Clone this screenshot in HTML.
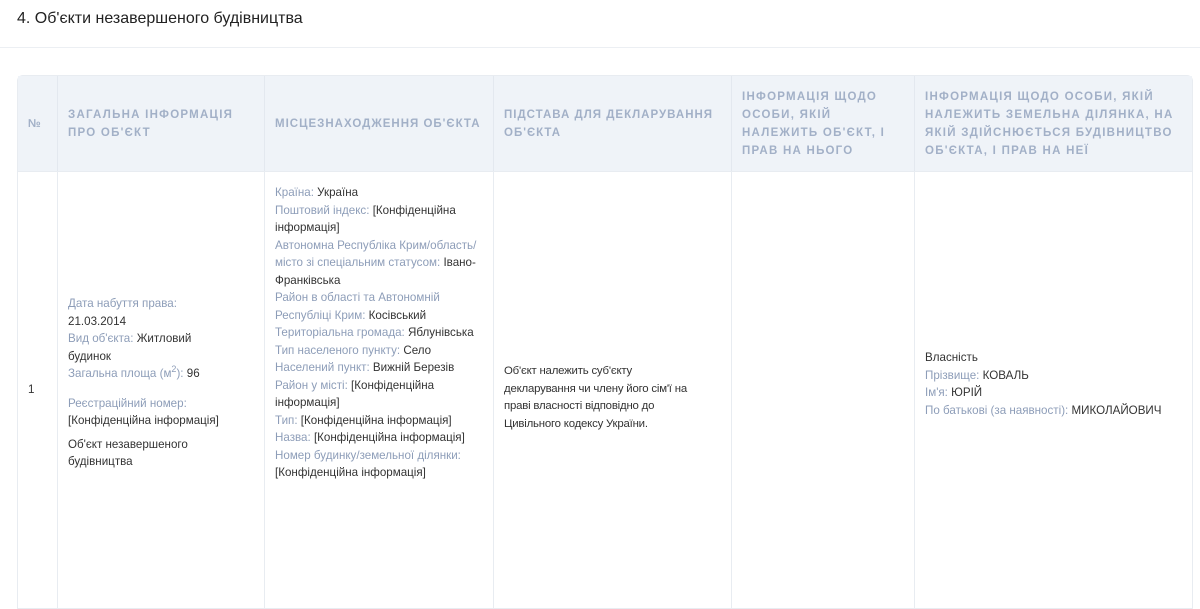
<!DOCTYPE html>
<html><head><meta charset="utf-8"><style>
body{margin:0;width:1200px;height:462px;overflow:hidden;background:#fff;font-family:"Liberation Sans",sans-serif;color:#333}
h2{margin:0;position:absolute;left:17px;top:10px;font-size:16px;font-weight:normal;color:#222}
.sep{position:absolute;left:0;top:47px;width:1200px;height:1px;background:#eceff3}
table{position:absolute;left:17px;top:75px;border-collapse:separate;border-spacing:0;width:1176px;table-layout:fixed;border:1px solid #e8ecf1;border-radius:6px 6px 0 0}
th{background:#eff3f8;color:#a2b0c7;font-size:11.5px;font-weight:bold;letter-spacing:1.25px;text-align:left;line-height:18px;height:95px;padding:0 0 0 10px;vertical-align:middle;border-left:1px solid #e3e8ef;text-transform:uppercase;white-space:nowrap;overflow:hidden}
th:first-child,td:first-child{border-left:none}
td{font-size:11.6px;line-height:17.5px;padding:0 24px 0 10px;vertical-align:middle;border-left:1px solid #e8ecf1;border-top:1px solid #e8ecf1;height:420px}
.l{color:#8d9db8}
td.top{vertical-align:top;padding-top:12px;padding-right:14px}
.g1{margin-top:12px}.g2{margin-top:6px}
.c{font-size:11.4px;line-height:17.5px;letter-spacing:-0.2px;padding-right:20px;padding-top:16px}
</style></head><body>
<h2>4. Об'єкти незавершеного будівництва</h2>
<div class="sep"></div>
<table>
<colgroup><col style="width:39px"><col style="width:207px"><col style="width:229px"><col style="width:238px"><col style="width:183px"><col></colgroup>
<tr><th style="letter-spacing:0">№</th><th>Загальна інформація<br>про об'єкт</th><th style="letter-spacing:1px">Місцезнаходження об'єкта</th><th style="letter-spacing:1px">Підстава для декларування<br>об'єкта</th><th>Інформація щодо<br>особи, якій<br>належить об'єкт, і<br>прав на нього</th><th>Інформація щодо особи, якій<br>належить земельна ділянка, на<br>якій здійснюється будівництво<br>об'єкта, і прав на неї</th></tr>
<tr>
<td style="padding-right:4px">1</td>
<td style="padding-right:40px;padding-bottom:14px"><span class="l">Дата набуття права:</span><br>21.03.2014<br><span class="l">Вид об'єкта:</span> Житловий будинок<br><span class="l">Загальна площа (м<sup style="font-size:9px;line-height:0">2</sup>):</span> 96<div class="g1"><span class="l">Реєстраційний номер:</span><br>[Конфіденційна інформація]</div><div class="g2">Об'єкт незавершеного будівництва</div></td>
<td class="top"><span class="l">Країна:</span> Україна<br><span class="l">Поштовий індекс:</span> [Конфіденційна інформація]<br><span class="l">Автономна Республіка Крим/область/ місто зі спеціальним статусом:</span> Івано-Франківська<br><span class="l">Район в області та Автономній Республіці Крим:</span> Косівський<br><span class="l">Територіальна громада:</span> Яблунівська<br><span class="l">Тип населеного пункту:</span> Село<br><span class="l">Населений пункт:</span> Вижній Березів<br><span class="l">Район у місті:</span> [Конфіденційна інформація]<br><span class="l">Тип:</span> [Конфіденційна інформація]<br><span class="l">Назва:</span> [Конфіденційна інформація]<br><span class="l">Номер будинку/земельної ділянки:</span> [Конфіденційна інформація]</td>
<td class="c">Об'єкт належить суб'єкту<br>декларування чи члену його сім'ї на<br>праві власності відповідно до<br>Цивільного кодексу України.</td>
<td></td>
<td style="padding-bottom:12px">Власність<br><span class="l">Прізвище:</span> КОВАЛЬ<br><span class="l">Ім'я:</span> ЮРІЙ<br><span class="l">По батькові (за наявності):</span> МИКОЛАЙОВИЧ</td>
</tr>
</table>
</body></html>
